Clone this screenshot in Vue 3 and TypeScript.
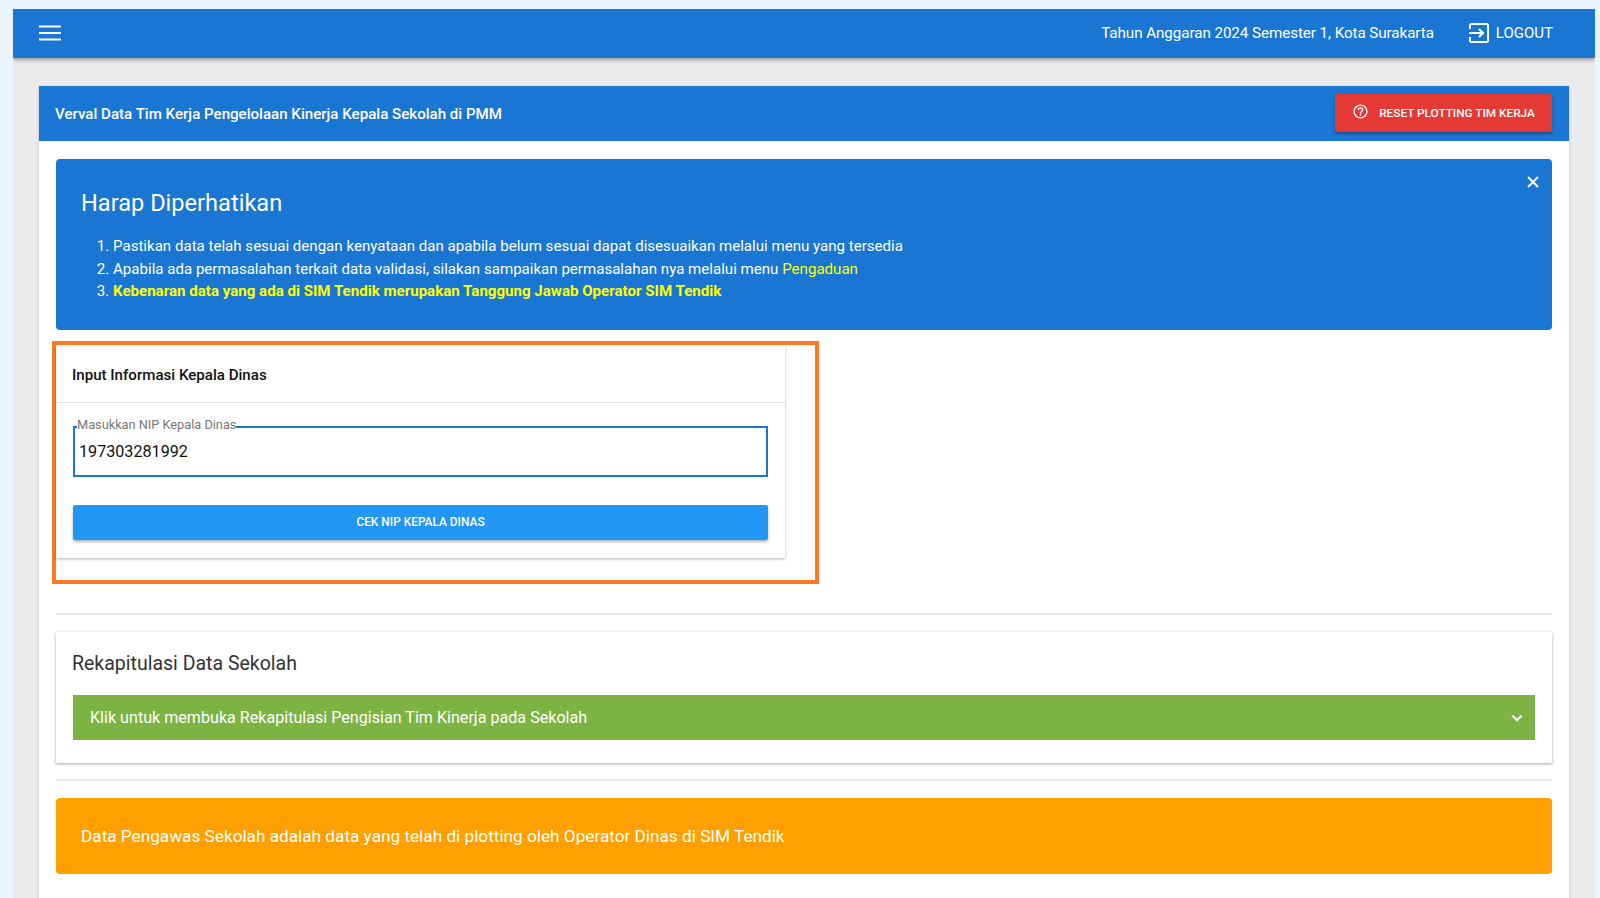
<script setup lang="ts">
const notes: string[] = [
  'Pastikan data telah sesuai dengan kenyataan dan apabila belum sesuai dapat disesuaikan melalui menu yang tersedia',
]
</script>

<template>
  <div class="app">
    <header class="toolbar">
      <svg class="burger" viewBox="0 0 22 16" width="22" height="16" aria-hidden="true">
        <path d="M0 1.500h22M0 8h22M0 14.500h22" stroke="#fff" stroke-width="2" fill="none" />
      </svg>
      <div class="spacer"></div>
      <span class="period">Tahun Anggaran 2024 Semester 1, Kota Surakarta</span>
      <button class="logout">
        <svg viewBox="0 0 20 20" width="20" height="20" aria-hidden="true">
          <path d="M1 6V2.500A1.500 1.500 0 0 1 2.500 1h15A1.500 1.500 0 0 1 19 2.500v15a1.500 1.500 0 0 1-1.500 1.500h-15A1.500 1.500 0 0 1 1 17.500V14" stroke="#fff" stroke-width="2" fill="none" />
          <path d="M0 10h13.500M10 6l4 4-4 4" stroke="#fff" stroke-width="2" fill="none" />
        </svg>
        <span>LOGOUT</span>
      </button>
    </header>
    <main class="main">
      <section class="card">
        <div class="card-head">
          <span class="card-title">Verval Data Tim Kerja Pengelolaan Kinerja Kepala Sekolah di PMM</span>
          <button class="reset">
            <svg viewBox="0 0 24 24" width="17" height="17" aria-hidden="true">
              <path fill="#fff" d="M11,18H13V16H11V18M12,2A10,10 0 0,0 2,12A10,10 0 0,0 12,22A10,10 0 0,0 22,12A10,10 0 0,0 12,2M12,20C7.59,20 4,16.41 4,12C4,7.59 7.59,4 12,4C16.41,4 20,7.59 20,12C20,16.41 16.41,20 12,20M12,6A4,4 0 0,0 8,10H10A2,2 0 0,1 12,8A2,2 0 0,1 14,10C14,12 11,11.75 11,15H13C13,12.75 16,12.5 16,10A4,4 0 0,0 12,6Z" />
            </svg>
            <span>RESET PLOTTING TIM KERJA</span>
          </button>
        </div>
        <div class="card-body">
          <div class="alert">
            <svg class="close" viewBox="0 0 12 12" width="12" height="12" aria-hidden="true">
              <path d="M1 1l10 10M11 1L1 11" stroke="#fff" stroke-width="2" fill="none" />
            </svg>
            <h2>Harap Diperhatikan</h2>
            <ol>
              <li v-for="n in notes" :key="n">{{ n }}</li>
              <li>Apabila ada permasalahan terkait data validasi, silakan sampaikan permasalahan nya melalui menu <span class="yellow">Pengaduan</span></li>
              <li><strong class="yellow">Kebenaran data yang ada di SIM Tendik merupakan Tanggung Jawab Operator SIM Tendik</strong></li>
            </ol>
          </div>
          <div class="highlight">
            <div class="nip-card">
              <div class="nip-head">Input Informasi Kepala Dinas</div>
              <div class="nip-body">
                <fieldset class="field">
                  <legend>Masukkan NIP Kepala Dinas</legend>
                  <input value="197303281992" />
                </fieldset>
                <button class="check">CEK NIP KEPALA DINAS</button>
              </div>
            </div>
          </div>
          <hr class="rule first" />
          <div class="recap">
            <h3>Rekapitulasi Data Sekolah</h3>
            <div class="panel">
              <span>Klik untuk membuka Rekapitulasi Pengisian Tim Kinerja pada Sekolah</span>
              <svg viewBox="0 0 24 24" width="20" height="20" aria-hidden="true">
                <path d="M7.410 8.580L12 13.170l4.590-4.590L18 10l-6 6-6-6z" fill="#fff" stroke="#fff" stroke-width=".8" />
              </svg>
            </div>
          </div>
          <hr class="rule second" />
          <div class="warning">Data Pengawas Sekolah adalah data yang telah di plotting oleh Operator Dinas di SIM Tendik</div>
        </div>
      </section>
    </main>
  </div>
</template>

<style>
html, body { margin: 0; background: #eaf4ff; overflow: hidden; }
</style>

<style scoped>
* { box-sizing: border-box; }
.app {
  margin: 9px 5px 0 13px;
  height: 889px;
  overflow: hidden;
  background: #ebebeb;
  font-family: Roboto, "Liberation Sans", sans-serif;
  color: #fff;
}
button { font-family: inherit; border: 0; color: #fff; padding: 0; }
.toolbar {
  position: relative;
  height: 49px;
  padding: 0 42px 0 26px;
  display: flex;
  align-items: center;
  background: #1976d2;
  box-shadow: 0 2px 4px rgba(0,0,0,.35);
}
.burger { margin-top: -2px; }
.spacer { flex: 1; }
.period { font-size: 15.250px; letter-spacing: -0.1px; margin-right: 35px; margin-top: -2px; }
.logout { display: flex; align-items: center; gap: 7px; background: none; font-size: 15px; margin-top: -2px; }
.main { padding: 28px 26px 0; }
.card { background: #fff; height: 812px; box-shadow: 0 1px 3px rgba(0,0,0,.2); }
.card-head {
  height: 55px;
  padding: 0 17px 0 16px;
  display: flex;
  align-items: center;
  justify-content: space-between;
  background: #1976d2;
}
.card-title { font-size: 15.100px; font-weight: 500; }
.reset {
  width: 217px;
  height: 38px;
  margin-top: -2px;
  display: flex;
  align-items: center;
  justify-content: center;
  gap: 10px;
  background: #e53935;
  border-radius: 2px;
  font-size: 11.800px;
  font-weight: 500;
  box-shadow: 0 2px 3px rgba(0,0,0,.3);
}
.reset svg { margin-top: -3px; }
.card-body { padding: 18px 17px 0; }
.alert {
  position: relative;
  height: 171px;
  padding: 30px 26px 0 25px;
  background: #1976d2;
  border-radius: 4px;
}
.close { position: absolute; top: 17px; right: 13px; }
h2 { margin: 0; font-size: 23.600px; font-weight: 400; line-height: 28px; }
ol { margin: 18px 0 0; padding: 0 0 0 32px; font-size: 15.080px; line-height: 22.500px; }
.yellow { color: #ffff00; }
strong { font-weight: 700; }
.highlight {
  width: 767px;
  height: 243px;
  margin: 11px 0 0 -4px;
  border: 4px solid #ff7a22;
  padding: 2px 30px 0 0;
}
.nip-card { height: 211px; color: #111; box-shadow: 0 1px 3px rgba(0,0,0,.3); }
.nip-head { height: 56px; padding: 0 16px; display: flex; align-items: center; font-size: 15.100px; font-weight: 500; border-bottom: 1px solid #e3e3e3; }
.nip-body { padding: 15px 17px 0; }
.field { margin: 0; height: 59px; padding: 0 4px; border: 2px solid #1976d2; min-width: 0; }
legend { padding: 0 0 4px; margin-left: -2px; font-size: 12.750px; line-height: 14px; color: #777; }
input { width: 100%; height: 30px; border: 0; outline: 0; padding: 0; font: 16.150px Roboto, sans-serif; color: #111; background: none; }
.check { display: block; width: 100%; height: 35px; margin-top: 28px; padding-bottom: 2px; background: #2196f3; border-radius: 2px; font-size: 11.900px; font-weight: 500; box-shadow: 0 2px 3px rgba(0,0,0,.3); }
.rule { margin: 0; height: 2px; border: 0; background: #ebebeb; }
.rule.first { margin-top: 29px; }
.rule.second { margin-top: 16px; }
.recap { height: 131px; margin-top: 17px; padding: 0 17px; color: #333; box-shadow: 0 1px 3px rgba(0,0,0,.35); }
h3 { margin: 0 0 0 -1px; height: 63px; display: flex; align-items: center; font-size: 19.500px; font-weight: 400; }
.panel { height: 45px; padding: 0 8px 0 17px; display: flex; align-items: center; justify-content: space-between; background: #7cb342; color: #fff; font-size: 16.130px; }
.warning { height: 76px; margin-top: 17px; padding: 0 26px 0 25px; display: flex; align-items: center; background: #ffa000; border-radius: 4px; font-size: 17.200px; }
</style>
